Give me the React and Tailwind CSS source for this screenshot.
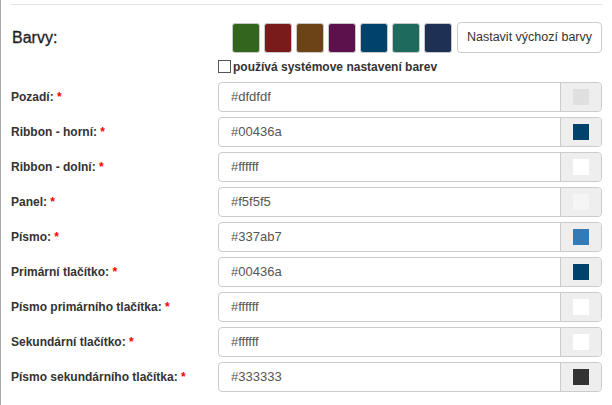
import React from "react";

const presets = ["#34651f", "#7a1b1b", "#6c4217", "#5d114c", "#00436a", "#1e6b5e", "#1e3054"];

const fields = [
  { label: "Pozadí:", value: "#dfdfdf" },
  { label: "Ribbon - horní:", value: "#00436a" },
  { label: "Ribbon - dolní:", value: "#ffffff" },
  { label: "Panel:", value: "#f5f5f5" },
  { label: "Písmo:", value: "#337ab7" },
  { label: "Primární tlačítko:", value: "#00436a" },
  { label: "Písmo primárního tlačítka:", value: "#ffffff" },
  { label: "Sekundární tlačítko:", value: "#ffffff" },
  { label: "Písmo sekundárního tlačítka:", value: "#333333" },
];

const ColorRow = ({ label, value }) => (
  <div className="flex h-[30px] items-center">
    <label className="w-[207px] text-[12px] font-bold text-[#333]">
      {label} <span className="text-[#ff0000]">*</span>
    </label>
    <div className="flex h-full flex-1 rounded-[4px] border border-[#ccc] bg-white">
      <input
        className="min-w-0 flex-1 bg-transparent px-3 text-[13px] text-[#555] outline-none"
        defaultValue={value}
      />
      <div className="flex w-[41px] items-center justify-center rounded-r-[4px] border-l border-[#ccc] bg-[#eee]">
        {/* color preview */}
        <div className="h-4 w-4" style={{ backgroundColor: value }} />
      </div>
    </div>
  </div>
);

export default function App() {
  return (
    <div
      className="h-[405px] w-[612px] overflow-hidden border-l border-[#aaa] bg-white pl-[10px] pr-[10px]"
      style={{ fontFamily: '"Liberation Sans", Arial, sans-serif' }}
    >
      <hr className="mt-[4px] border-t border-[#e5e5e5]" />

      {/* header */}
      <div className="mt-[17px] flex h-[31px] items-center">
        <h2 className="w-[221px] pl-px text-[16px] text-[#222] [-webkit-text-stroke:0.3px_#222]">Barvy:</h2>
        <div className="flex gap-1">
          {presets.map((c) => (
            <button
              key={c}
              className="h-[30px] w-[28px] rounded-[3px] border border-[#c8c8c8]"
              style={{ backgroundColor: c }}
            />
          ))}
        </div>
        <button className="ml-[5px] h-[31px] flex-1 rounded-[4px] border border-[#ccc] bg-white text-[12.5px] text-[#333]">
          Nastavit výchozí barvy
        </button>
      </div>

      {/* system colors */}
      <label className="ml-[207px] mt-[7px] flex h-[13px] items-center gap-[2px] text-[12px] font-bold leading-none text-[#333]">
        <span className="h-[13px] w-[13px] border border-[#555] bg-white" />
        používá systémove nastavení barev
      </label>

      <div className="mt-[9px] flex flex-col gap-[5px]">
        {fields.map((f) => (
          <ColorRow key={f.label} {...f} />
        ))}
      </div>
    </div>
  );
}
